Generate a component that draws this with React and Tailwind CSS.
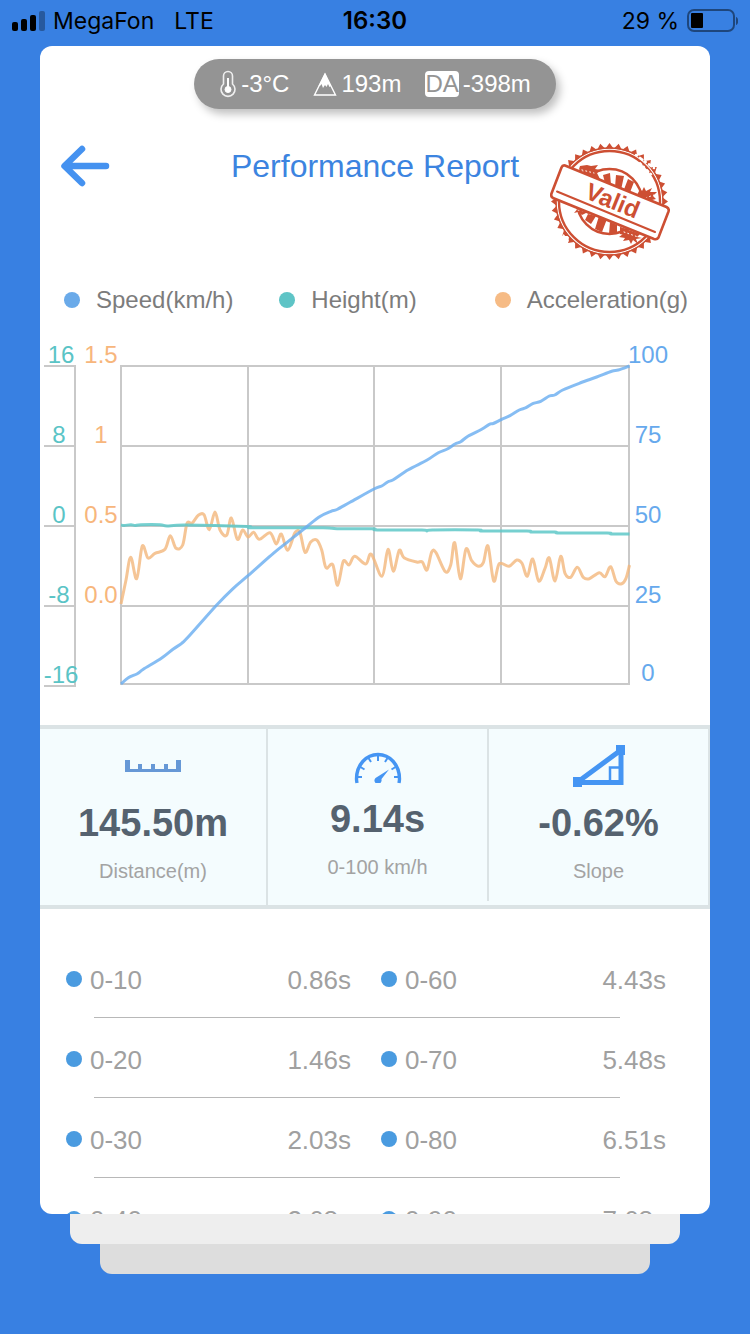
const SPEED = [
    [81, 344], [88.3, 337.7], [97.3, 333.7], [103.3, 329.3], [121.7, 318], [133.3, 309], [141.7, 303.3],
    [150, 295], [176.7, 265], [193.3, 248.3], [208, 235.7], [233.3, 213.3], [248.3, 201.3], [266.7, 186.7],
    [280, 176.5], [291, 171.3], [297, 169.5], [310, 162.3], [334, 149], [341.7, 146], [348, 141.7], [353.3, 139.7],
    [368.3, 129.7], [386.7, 120.3], [398.3, 112.7], [407.3, 109], [415, 104], [420.7, 101.7], [428.3, 96],
    [441.7, 89.3], [449.3, 84.3], [453.3, 83.5], [461.7, 79.3], [470, 75.7], [479.3, 70], [486, 67.7],
    [492.7, 63.7], [500.7, 61.3], [509.3, 56], [514.7, 55], [522.7, 50], [540, 43], [556.7, 37], [571.7, 31.3],
    [578.3, 30], [589.5, 26],
];

const HEIGHT = [
    [81, 185], [84, 185.5], [91, 184.7], [95, 185.5], [101, 184.7], [120, 184.7], [127, 186], [145, 185],
    [207, 186.5], [213, 187.7], [283, 187.7], [297, 188.7], [333, 188.7], [337, 190], [382, 190], [387, 191],
    [392, 190], [438, 190], [443, 191], [487, 191], [492, 192], [515, 192], [520, 193], [567, 193], [571, 194],
    [589.5, 194],
];

const ACCELERATION = [
    [81, 264], [86, 240], [90.7, 217.3], [96.7, 238.7], [102.3, 206], [108, 218], [115, 213.3], [125, 209.3],
    [130.3, 195.7], [136, 208.3], [142.7, 205], [147, 183.3], [152, 183.3], [158.3, 175.3], [164, 174.7],
    [169.3, 189.7], [175, 172], [180, 190], [186.7, 195.3], [191.3, 178], [197.3, 199.3], [202.7, 190],
    [208, 197], [213.7, 192.3], [219.3, 199.3], [230, 192.7], [236.3, 204], [241.3, 194], [247.7, 210.3],
    [255, 192.7], [260, 192.7], [265, 212.3], [270.7, 202], [276.7, 200], [281.7, 210], [286, 227.7],
    [292.7, 224.7], [297.7, 245.3], [303.3, 221.3], [309, 225], [314.7, 216.3], [325.7, 224], [331.3, 214.3],
    [342, 236.3], [348, 209.3], [353.3, 231.3], [359.3, 210.3], [364, 217.7], [376.7, 222], [382.3, 222],
    [387, 230], [391.7, 212], [396, 212.7], [405.3, 231.7], [410.7, 225], [414.7, 202.7], [420.3, 238.7],
    [426, 209], [431.7, 220.7], [438.3, 226.3], [443.3, 222.7], [448, 206], [453.7, 241], [459.3, 223.7],
    [469, 226.3], [476.7, 220], [482, 223.3], [487.3, 236.3], [492.7, 219], [498.7, 241], [505, 228.3],
    [509.3, 218], [515, 241], [520.7, 216.3], [525, 233.3], [530.7, 237.3], [537.3, 227.3], [543.3, 237.3],
    [549.3, 238.7], [559.3, 232.7], [565, 236.7], [570.7, 226.7], [576, 241.3], [581.7, 243.7], [586, 238.3],
    [589.5, 225],
];

const LEGEND = [
    { label: 'Speed(km/h)', dot: 'bg-[#6aaae9]' },
    { label: 'Height(m)', dot: 'bg-[#5ec4c6]' },
    { label: 'Acceleration(g)', dot: 'bg-[#f6bb85]' },
];

const SPLITS = [
    [['0-10', '0.86s'], ['0-60', '4.43s']],
    [['0-20', '1.46s'], ['0-70', '5.48s']],
    [['0-30', '2.03s'], ['0-80', '6.51s']],
    [['0-40', '2.68s'], ['0-90', '7.68s']],
    [['0-50', '3.49s'], ['0-100', '9.14s']],
];

// Catmull-Rom spline through the samples
function smooth(points) {
    let d = `M${points[0][0]} ${points[0][1]}`;
    for (let i = 0; i < points.length - 1; i++) {
        const p0 = points[i - 1] || points[i];
        const p1 = points[i];
        const p2 = points[i + 1];
        const p3 = points[i + 2] || p2;
        d += `C${p1[0] + (p2[0] - p0[0]) / 6} ${p1[1] + (p2[1] - p0[1]) / 6} ${p2[0] - (p3[0] - p1[0]) / 6} ${p2[1] - (p3[1] - p1[1]) / 6} ${p2[0]} ${p2[1]}`;
    }
    return d;
}

function StatusBar() {
    return (
        <div className="grid grid-cols-[1fr_auto_1fr] items-center h-[46px] pb-1 px-3 text-black text-[23px] font-[Inter,sans-serif]">
            <div className="flex items-center">
                <svg width="33" height="20" viewBox="0 0 33 20" aria-hidden="true">
                    <rect x="0" y="11" width="6" height="9" rx="2" />
                    <rect x="9" y="8" width="6" height="12" rx="2" />
                    <rect x="18" y="4" width="6" height="16" rx="2" />
                    <rect x="27" y="0" width="6" height="20" rx="2" opacity="0.3" />
                </svg>
                <span className="ml-2">MegaFon</span>
                <span className="ml-5">LTE</span>
            </div>
            <span className="text-2xl font-semibold">16:30</span>
            <div className="flex items-center justify-end gap-2">
                <span>29 %</span>
                <svg width="51" height="24" viewBox="0 0 51 24" aria-hidden="true">
                    <rect x="1" y="1" width="46" height="21" rx="6" fill="none" stroke="#000" strokeWidth="2" opacity="0.45" />
                    <rect x="4" y="4" width="12" height="15" rx="1" />
                    <path d="M49 8c3 1 3 7 0 8z" opacity="0.45" />
                </svg>
            </div>
        </div>
    );
}

function WeatherPill() {
    return (
        <div className="flex items-center self-center h-[50px] px-[25px] rounded-full bg-[#949494] text-white text-2xl shadow-[4px_5px_8px_rgba(0,0,0,0.25)]">
            <svg width="18" height="28" viewBox="0 0 18 28" fill="none" stroke="#fff" aria-hidden="true">
                <path d="M4.500 14V6a4.500 4.500 0 0 1 9 0v8a7 7 0 1 1-9 0z" strokeWidth="1.600" opacity="0.85" />
                <path d="M9 8v11" strokeWidth="2" />
                <circle cx="9" cy="19.500" r="3" fill="#fff" />
            </svg>
            <span className="ml-1">-3°C</span>
            <svg width="24" height="24" viewBox="0 0 24 24" className="ml-6" aria-hidden="true">
                <path d="M12 2L1.500 23h21z" fill="none" stroke="#fff" strokeWidth="1.400" />
                <path d="M12 1L5.500 14l1.500 0 1.500-2 1.500 4 2-3 1.500 2 1.500-3 1.500 3 1.500-1z" fill="#fff" />
            </svg>
            <span className="ml-1">193m</span>
            <span className="ml-6 rounded bg-white text-[#949494] leading-[26px]">DA</span>
            <span className="ml-1">-398m</span>
        </div>
    );
}

function Stamp() {
    const teeth = [];
    const count = 40;
    for (let i = 0; i < count * 2; i++) {
        const a = (i * Math.PI) / count;
        const r = i % 2 ? 53 : 58.5;
        teeth.push(`${(79.5 + r * Math.cos(a)).toFixed(1)},${(71.5 + r * Math.sin(a)).toFixed(1)}`);
    }
    return (
        <svg width="120" height="118" viewBox="20 12 120 118" role="img" aria-label="Valid stamp">
            <polygon points={teeth.join(' ')} fill="#cd4f33" />
            <circle cx="79.500" cy="71.500" r="53" fill="#fff" />
            <circle cx="79.500" cy="71.500" r="53.500" fill="none" stroke="#cd4f33" strokeWidth="1.400" />
            <circle cx="79.500" cy="71.500" r="50.500" fill="none" stroke="#cd4f33" strokeWidth="2.400" />
            <circle cx="79.500" cy="71.500" r="32.500" fill="none" stroke="#cd4f33" strokeWidth="2.500" />
            <g fill="#cd4f33">
                <path d="M73 45l7-2 1 12-6-2zM86 45l8 1-3 14-6-3zM98 49l6 3-5 13-6-3zM110 59l4 4-4 4-3-2z" />
                <path d="M58 84l8 2-5 8-6-4zM69 86l8 3-5 13-7-3zM80 92l7 3v9h-8zM90 97l6 2-2 6-4-1z" />
                <path d="M50 36l7-1 4 1 7-1-3 4 6 1-4 3 3 6-5-1-4-2-6-1-2-4-5 1z" />
                <path d="M107 66l5-5 2-4 2 4 6-3-2 4 7 0-4 4 3 3-4 1 1 5-4-1-1 3-4-3-6-1z" />
                <path d="M50 76l14 4-2 4-6-1-4 2-4-3-4 1zM53 70l5 7-10-3zM60 79l10 7-14-4z" />
                <path d="M90 97l20 7-3 3 5 1-6 1 2 5-5-4-2 4-2-4-6 1 2-3-6-1 4-3z" />
            </g>
            {/* worn ink */}
            <g fill="none" stroke="#fff" strokeLinecap="round">
                <path d="M106 25l18 13" strokeWidth="2.500" strokeDasharray="1 4 3 3" />
                <path d="M110 33l14 14" strokeWidth="2" strokeDasharray="2 3 1 4" />
                <path d="M29 100l18 22" strokeWidth="2" strokeDasharray="2 5 1 4" />
                <path d="M48 39l16 4M112 69l12-4M48 80l18 3M94 102l14 5" strokeWidth="1" strokeDasharray="1 3" />
            </g>
            <path d="M35 35.500l101.500 41.500q3 1.500 2 4.500l-10 26q-1.500 2.500-4.500 1.500l-101-41q-2.500-1.500-1.500-4.500l10-26q1-2.500 3.500-2z" fill="#fff" stroke="#cd4f33" strokeWidth="2.600" />
            <path d="M27 61.500l98 40.500" stroke="#cd4f33" strokeWidth="2" strokeLinecap="round" />
            <text x="83" y="79" textAnchor="middle" transform="rotate(22 83 70)" fill="#cd4f33" fontSize="24" fontWeight="700" fontFamily="Liberation Sans, sans-serif">Valid</text>
        </svg>
    );
}

function Chart() {
    const rows = [23, 103, 183, 263, 343];
    return (
        <svg viewBox="0 0 670 385" className="block w-full mt-6" fontFamily="Liberation Sans, sans-serif" fontSize="24" textAnchor="middle" role="img" aria-label="Speed, height and acceleration">
            <g fill="none" stroke="#c9c9c9" strokeWidth="2">
                <path d="M4 26H35V346H4M4 106H35M4 186H35M4 266H35" />
                <path d="M81 26H589V344H81zM81 106H589M81 186H589M81 266H589M208 26V344M334 26V344M461 26V344" />
            </g>
            <g fill="none" strokeWidth="3" strokeLinejoin="round">
                <path d={smooth(ACCELERATION)} stroke="#f3b67c" opacity="0.8" />
                <path d={smooth(HEIGHT)} stroke="#5ec8c8" opacity="0.85" />
                <path d={smooth(SPEED)} stroke="#68adf0" opacity="0.8" />
            </g>
            <g fill="#5ac4c6">
                {['16', '8', '0', '-8', '-16'].map((t, i) => <text key={t} x={t.length > 1 && t !== '-8' ? 21 : 19} y={rows[i]}>{t}</text>)}
            </g>
            <g fill="#f7b67c">
                {['1.5', '1', '0.5', '0.0'].map((t, i) => <text key={t} x="61" y={rows[i]}>{t}</text>)}
            </g>
            <g fill="#66a9ed">
                {['100', '75', '50', '25', '0'].map((t, i) => <text key={t} x="608" y={t === '0' ? 341 : rows[i]}>{t}</text>)}
            </g>
        </svg>
    );
}

function RulerIcon() {
    return (
        <svg width="56" height="48" viewBox="0 0 56 48" fill="#6698d6" aria-hidden="true">
            <path d="M0 19h5v9h8v-5h4v5h9v-5h4v5h9v-5h4v5h8v-9h5v12H0z" />
        </svg>
    );
}

function GaugeIcon() {
    return (
        <svg width="50" height="44" viewBox="0 0 50 44" fill="none" stroke="#4595f3" aria-hidden="true">
            <path d="M4 42a23 23 0 0 1-.5-4C3.500 24 13 13.500 25 13.500s21.500 10.500 21.500 24.500a23 23 0 0 1-.5 4" strokeWidth="3.400" />
            <path d="M25 14v6M15.500 17l2.500 4M34.500 17l-2.500 4M7.500 26l4 2.500M42.500 26l-4 2.500M4 36h5M46 36h-5" strokeWidth="2" />
            <path d="M36 28.500L22.500 37a3.800 3.800 0 0 0 0 5h5a4 4 0 0 0 1-4z" fill="#4595f3" stroke="none" />
        </svg>
    );
}

function SlopeIcon() {
    return (
        <svg width="52" height="48" viewBox="0 0 52 48" fill="none" stroke="#4595f3" aria-hidden="true">
            <path d="M4 41.500L48 9v32.500z" strokeWidth="5" />
            <path d="M47 26.500H37V40" strokeWidth="2.500" />
            <path d="M0 36h9v10H0zM43 4h9v10h-9z" fill="#4595f3" stroke="none" />
        </svg>
    );
}

function Stat({ icon, value, label }) {
    return (
        <div className="flex flex-col items-center self-start pt-3 pb-5 border-r-2 border-[#dbe3e5]">
            {icon}
            <p className="mt-3 text-[38px] leading-11 font-bold text-[#55626f]">{value}</p>
            <p className="mt-3 text-xl leading-7 text-[#a3a3a3]">{label}</p>
        </div>
    );
}

export default function App() {
    return (
        <div className="flex flex-col h-screen pb-[60px] bg-[#3880e2] font-['Liberation_Sans',Arial,sans-serif]">
            <StatusBar />

            <main className="flex-1 min-h-0 mx-10 flex flex-col overflow-y-auto [scrollbar-width:none] rounded-xl bg-white">
                <div className="flex flex-col shrink-0 pt-[13px]">
                    <WeatherPill />
                </div>

                <header className="grid grid-cols-[1fr_auto_1fr] items-start shrink-0 mt-[33px] px-5">
                    <button type="button" aria-label="Back" className="flex items-center h-12 justify-self-start">
                        <svg width="50" height="42" viewBox="0 0 50 42" fill="none" stroke="#4592f0" strokeWidth="6.500" strokeLinecap="round" strokeLinejoin="round" aria-hidden="true">
                            <path d="M22 4L4.500 21 22 38M5 21h41" />
                        </svg>
                    </button>
                    <h1 className="h-12 leading-12 text-[32px] text-[#3c84e0]">Performance Report</h1>
                    <div className="justify-self-end mr-5"><Stamp /></div>
                </header>

                <ul className="grid grid-cols-3 shrink-0 mt-6 pl-6 text-2xl text-[#7c7c7c]">
                    {LEGEND.map(({ label, dot }) => (
                        <li key={label} className="flex items-center gap-4 whitespace-nowrap">
                            <span className={`size-4 shrink-0 rounded-full ${dot}`} />
                            {label}
                        </li>
                    ))}
                </ul>

                <div className="shrink-0">
                    <Chart />
                </div>

                <section className="grid grid-cols-[228fr_221fr_221fr] shrink-0 border-y-4 border-[#dbe3e5] bg-[#f4fcfe]">
                    <Stat icon={<RulerIcon />} value="145.50m" label="Distance(m)" />
                    <Stat icon={<GaugeIcon />} value="9.14s" label="0-100 km/h" />
                    <Stat icon={<SlopeIcon />} value="-0.62%" label="Slope" />
                </section>

                <ul className="shrink-0 pt-[29px] text-[26px] text-[#a0a0a0]">
                    {SPLITS.map((row) => (
                        <li key={row[0][0]} className="pt-[3px]">
                            <div className="grid grid-cols-2 gap-x-[30px] h-19 pl-[26px] pr-11">
                                {row.map(([range, time]) => (
                                    <div key={range} className="flex items-center">
                                        <span className="size-4 mr-2 rounded-full bg-[#4a9be0]" />
                                        <span className="pt-0.5">{range}</span>
                                        <span className="ml-auto pt-0.5">{time}</span>
                                    </div>
                                ))}
                            </div>
                            <hr className="ml-[54px] mr-[90px] border-[#b8b8b8]" />
                        </li>
                    ))}
                </ul>
            </main>

            <div className="shrink-0 h-[30px] mx-[70px] rounded-b-xl bg-[#eeeeee]" />
            <div className="shrink-0 h-[30px] mx-[100px] rounded-b-xl bg-[#dddddd]" />
        </div>
    );
}
